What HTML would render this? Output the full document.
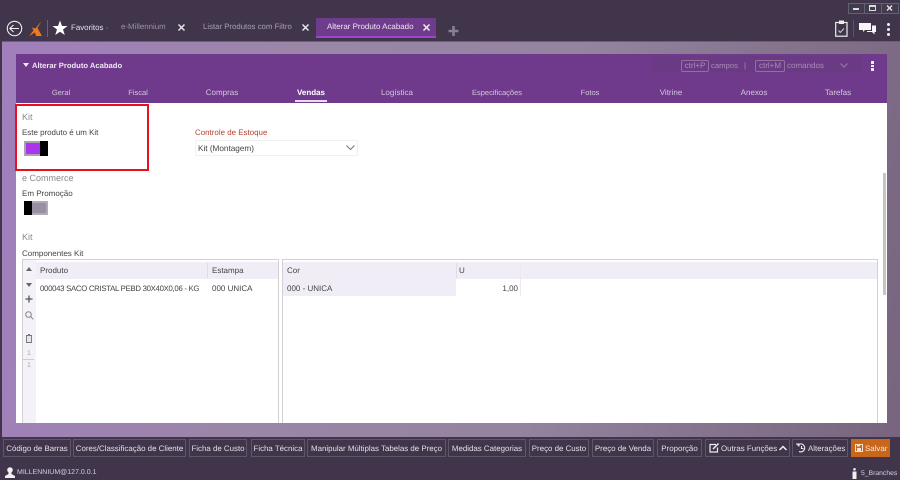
<!DOCTYPE html>
<html><head><meta charset="utf-8">
<style>
html,body{margin:0;padding:0;width:900px;height:480px;overflow:hidden;background:#40354a}
body{font-family:"Liberation Sans",sans-serif;font-size:8px;position:relative;text-rendering:geometricPrecision;filter:blur(.3px)}
.a{position:absolute;white-space:nowrap}
.t{position:absolute;white-space:nowrap;line-height:12px;height:12px}
.btn{position:absolute;top:439px;height:18px;box-sizing:border-box;border:1px solid #615668;color:#e4dfe8;text-align:center;line-height:18px;font-size:7.9px;white-space:nowrap;overflow:hidden}
.tab{color:#d5c6de;top:86.500px;font-size:7.5px;transform:translateX(-50%)}
svg{position:absolute;overflow:visible}
</style></head><body>

<!-- top bar -->
<div class="a" style="left:0;top:0;width:900px;height:41px;background:#40354a"></div>
<!-- window buttons -->
<div class="a" style="left:848px;top:3px;width:49px;height:9px;border:1px solid #5d6478;background:#433a4e"></div>
<div class="a" style="left:864px;top:3px;width:1px;height:10px;background:#5d6478"></div>
<div class="a" style="left:881px;top:3px;width:1px;height:10px;background:#5d6478"></div>
<div class="a" style="left:853px;top:8px;width:6px;height:2px;background:#dcdce0"></div>
<div class="a" style="left:869px;top:5px;width:5px;height:3px;border:1px solid #dcdce0;border-top-width:2px"></div>
<svg style="left:886px;top:5px" width="7" height="6"><path d="M1 0.5L6 5.500M6 0.5L1 5.500" stroke="#e4e4e8" stroke-width="1.400"/></svg>

<!-- back -->
<svg style="left:6px;top:20px" width="18" height="18" viewBox="0 0 18 18"><circle cx="8.500" cy="8.500" r="7.200" fill="none" stroke="#f0eef2" stroke-width="1.100"/><path d="M3.800 8.500H13M7.500 5L3.800 8.500L7.500 12" fill="none" stroke="#f0eef2" stroke-width="1.100"/></svg>
<!-- logo -->
<svg style="left:29px;top:21px" width="14" height="16" viewBox="0 0 14 16"><path d="M12.500 0L8.500 7L13 15H7L6 11.500L0 15L4.500 9.500L3 6.500L6.500 7.500Z" fill="#ee7a1c"/></svg>
<div class="a" style="left:47px;top:20px;width:1px;height:17px;background:#6b6274"></div>
<!-- star -->
<svg style="left:52px;top:20px" width="16" height="16" viewBox="0 0 16 16"><path d="M8 0.500L10 6H15.500L11 9.500L12.800 15L8 11.700L3.200 15L5 9.500L0.500 6H6Z" fill="#fff"/></svg>
<div class="t" style="left:71px;top:22px;color:#e6e0ea;font-size:7.900px">Favoritos<span style="color:#8d8496"> -</span></div>
<div class="t" style="left:121px;top:21px;color:#9c92a4;font-size:7.900px">e-Millennium</div>
<svg style="left:178px;top:24px" width="7" height="7"><path d="M.5 .5L6.500 6.500M6.500 .5L.5 6.500" stroke="#e8e4ea" stroke-width="1.500"/></svg>
<div class="t" style="left:203px;top:21px;color:#a89eb0;font-size:7.800px">Listar Produtos com Filtro</div>
<svg style="left:302px;top:24px" width="7" height="7"><path d="M.5 .5L6.500 6.500M6.500 .5L.5 6.500" stroke="#e8e4ea" stroke-width="1.500"/></svg>
<div class="a" style="left:316px;top:18px;width:120px;height:18px;background:#6f3c8c"></div>
<div class="a" style="left:316px;top:36px;width:120px;height:2px;background:#a044d0"></div>
<div class="t" style="left:327px;top:21px;color:#eee6f2;font-size:7.950px">Alterar Produto Acabado</div>
<svg style="left:423px;top:24px" width="7" height="7"><path d="M.5 .5L6.500 6.500M6.500 .5L.5 6.500" stroke="#eee" stroke-width="1.500"/></svg>
<svg style="left:448px;top:26px" width="11" height="11"><path d="M5.500 0V10M.5 5H10.500" stroke="#89808f" stroke-width="2.600"/></svg>

<!-- right icons -->
<svg style="left:835px;top:20px" width="13" height="17" viewBox="0 0 13 17"><rect x=".7" y="2.500" width="11.300" height="13.700" fill="none" stroke="#eee" stroke-width="1.200"/><rect x="4" y=".5" width="5" height="3.500" fill="#eee"/><path d="M3.500 10.500L5.200 12.500L9 8.500" fill="none" stroke="#ccc" stroke-width="1"/></svg>
<div class="a" style="left:853px;top:20px;width:1px;height:17px;background:#5c5365"></div>
<svg style="left:859px;top:23px" width="17" height="12" viewBox="0 0 17 12"><path d="M0 0H12V7H6L4 9V7H0Z" fill="#f6f6f6"/><path d="M13 2.500H17V9H15.500V11.500L13 9H8V8H13Z" fill="#f6f6f6"/></svg>
<div class="a" style="left:887px;top:23px;width:3px;height:3px;border-radius:2px;background:#f0f0f0"></div>
<div class="a" style="left:887px;top:28px;width:3px;height:3px;border-radius:2px;background:#f0f0f0"></div>
<div class="a" style="left:887px;top:33px;width:3px;height:3px;border-radius:2px;background:#f0f0f0"></div>

<!-- main background -->
<div class="a" style="left:2px;top:41px;width:898px;height:396px;background:linear-gradient(100deg,#a17fbd 0%,#9b86a8 30%,#94849f 60%,#78647f 100%);border-top:1px solid #6a5e74;box-sizing:border-box"></div>
<div class="a" style="left:0;top:41px;width:2px;height:396px;background:#40354a"></div>

<!-- card -->
<div class="a" style="left:16px;top:54px;width:871px;height:49px;background:#6f3a8c"></div>
<div class="a" style="left:16px;top:103px;width:871px;height:320px;background:#fff"></div>

<svg style="left:23px;top:63px" width="6" height="4"><path d="M0 0H6L3 4Z" fill="#eee"/></svg>
<div class="t" style="left:32px;top:60px;color:#efe6f3;font-size:7.650px;font-weight:bold">Alterar Produto Acabado</div>

<div class="a" style="left:652px;top:56px;width:209px;height:17px;background:#6a3a85"></div>
<div class="a" style="left:681px;top:60px;width:26px;height:10px;border:1px solid #93709f;border-radius:2px;color:#a88cb6;text-align:center;line-height:10px;font-size:8px">ctrl+P</div>
<div class="t" style="left:711px;top:60px;color:#a88cb6;font-size:7.700px">campos</div>
<div class="t" style="left:744px;top:60px;color:#a88cb6;font-size:8px">|</div>
<div class="a" style="left:755px;top:60px;width:28px;height:10px;border:1px solid #93709f;border-radius:2px;color:#a88cb6;text-align:center;line-height:10px;font-size:8px">ctrl+M</div>
<div class="t" style="left:787px;top:60px;color:#a88cb6;font-size:8px">comandos</div>
<svg style="left:840px;top:63px" width="8" height="5"><path d="M.5 .5L4 4L7.500 .5" fill="none" stroke="#9a7ca9" stroke-width="1"/></svg>
<div class="a" style="left:871px;top:61px;width:3px;height:2.500px;background:#eee"></div>
<div class="a" style="left:871px;top:64.500px;width:3px;height:2.500px;background:#eee"></div>
<div class="a" style="left:871px;top:68px;width:3px;height:2.500px;background:#eee"></div>

<div class="t tab" style="left:61px">Geral</div>
<div class="t tab" style="left:138px">Fiscal</div>
<div class="t tab" style="left:222px;font-size:8px">Compras</div>
<div class="t tab" style="left:311px;color:#fff;font-weight:bold;font-size:8px">Vendas</div>
<div class="a" style="left:295px;top:100px;width:32px;height:2px;background:#e6dcec"></div>
<div class="t tab" style="left:397px;font-size:8px">Logística</div>
<div class="t tab" style="left:497px">Especificações</div>
<div class="t tab" style="left:590px">Fotos</div>
<div class="t tab" style="left:671px;font-size:8px">Vitrine</div>
<div class="t tab" style="left:754px;font-size:8px">Anexos</div>
<div class="t tab" style="left:838px;font-size:8px">Tarefas</div>

<!-- Kit -->
<div class="t" style="left:22px;top:111px;color:#8a8a8a;font-size:9px">Kit</div>
<div class="t" style="left:22px;top:127px;color:#444;font-size:7.950px">Este produto é um Kit</div>
<div class="a" style="left:24px;top:141px;width:24px;height:15px;box-sizing:border-box;border:2px solid #a9a3ae;background:#fff"></div>
<div class="a" style="left:26px;top:143px;width:14px;height:11px;background:#ab35ee"></div>
<div class="a" style="left:40px;top:141px;width:8px;height:15px;background:#000"></div>
<div class="a" style="left:15px;top:104px;width:134px;height:67px;box-sizing:border-box;border:2px solid #e8101c"></div>

<div class="t" style="left:195px;top:127px;color:#b5412f;font-size:7.950px">Controle de Estoque</div>
<div class="a" style="left:195px;top:140px;width:163px;height:16px;box-sizing:border-box;border:1px solid #f0f0f0"></div>
<div class="t" style="left:198px;top:143px;color:#444;font-size:8.200px">Kit (Montagem)</div>
<svg style="left:346px;top:145px" width="9" height="6"><path d="M.5 .5L4.500 4.500L8.500 .5" fill="none" stroke="#777" stroke-width="1"/></svg>

<!-- e Commerce -->
<div class="t" style="left:22px;top:172px;color:#8a8a8a;font-size:9px">e Commerce</div>
<div class="t" style="left:22px;top:188px;color:#444;font-size:8px">Em Promoção</div>
<div class="a" style="left:24px;top:201px;width:24px;height:14px;box-sizing:border-box;border:2px solid #b0a9b6;background:#9a8ea5"></div>
<div class="a" style="left:24px;top:201px;width:8px;height:14px;background:#000"></div>

<!-- Kit grid -->
<div class="t" style="left:22px;top:231px;color:#8a8a8a;font-size:9px">Kit</div>
<div class="t" style="left:22px;top:248px;color:#444;font-size:8px">Componentes Kit</div>

<div class="a" style="left:22px;top:259px;width:257px;height:164px;box-sizing:border-box;border:1px solid #d2d0d4;border-bottom:0;background:#fff"></div>
<div class="a" style="left:23px;top:260px;width:13px;height:163px;background:#f4f1f8"></div>
<div class="a" style="left:36px;top:262px;width:242px;height:17px;background:#f1edf6"></div>
<div class="a" style="left:207px;top:263px;width:1px;height:15px;background:#e0dce6"></div>
<div class="t" style="left:40px;top:265px;color:#444;font-size:8px">Produto</div>
<div class="t" style="left:212px;top:265px;color:#444;font-size:8px">Estampa</div>
<div class="t" style="left:40px;top:283px;color:#444;font-size:7.800px;letter-spacing:-.3px">000043 SACO CRISTAL PEBD 30X40X0,06 - KG</div>
<div class="t" style="left:212px;top:283px;color:#444;font-size:8px">000 UNICA</div>

<svg style="left:26px;top:267px" width="6" height="4"><path d="M0 4H6L3 0Z" fill="#666"/></svg>
<svg style="left:26px;top:283px" width="6" height="4"><path d="M0 0H6L3 4Z" fill="#666"/></svg>
<svg style="left:25px;top:295px" width="8" height="8"><path d="M4 .5V7.500M.5 4H7.500" stroke="#555" stroke-width="1.300"/></svg>
<svg style="left:25px;top:311px" width="9" height="9"><circle cx="3.500" cy="3.500" r="2.800" fill="none" stroke="#888"/><path d="M5.500 5.500L8.300 8.300" stroke="#888"/></svg>
<svg style="left:25px;top:334px" width="8" height="9"><path d="M1 1.500H7M1.500 2V8.500H6.500V2M3 .5H5" fill="#e6e6e6" stroke="#777" stroke-width=".9"/></svg>
<div class="t" style="left:27px;top:348px;color:#aaa;font-size:7px">1</div>
<div class="a" style="left:23px;top:359px;width:11px;height:1px;background:#d0ccd4"></div>
<div class="t" style="left:27px;top:360px;color:#aaa;font-size:7px">1</div>

<div class="a" style="left:282px;top:259px;width:596px;height:164px;box-sizing:border-box;border:1px solid #d2d0d4;border-bottom:0;background:#fff"></div>
<div class="a" style="left:283px;top:262px;width:594px;height:17px;background:#f1edf6"></div>
<div class="a" style="left:283px;top:279px;width:173px;height:17px;background:#f1edf6"></div>
<div class="a" style="left:456px;top:263px;width:1px;height:15px;background:#e0dce6"></div>
<div class="a" style="left:520px;top:263px;width:1px;height:33px;background:#ece9f0"></div>
<div class="t" style="left:287px;top:265px;color:#444;font-size:8px">Cor</div>
<div class="t" style="left:459px;top:265px;color:#444;font-size:8px">U</div>
<div class="t" style="left:287px;top:283px;color:#444;font-size:8px">000 - UNICA</div>
<div class="t" style="left:490px;top:283px;width:28px;text-align:right;color:#444;font-size:8px">1,00</div>

<!-- scrollbar -->
<div class="a" style="left:883px;top:173px;width:3px;height:122px;background:#c4c4c4"></div>

<!-- bottom bar -->
<div class="a" style="left:0;top:437px;width:900px;height:43px;background:#40354a"></div>
<div class="btn" style="left:3px;width:68px">Código de Barras</div>
<div class="btn" style="left:73px;width:113px">Cores/Classificação de Cliente</div>
<div class="btn" style="left:189px;width:58px">Ficha de Custo</div>
<div class="btn" style="left:251px;width:54px">Ficha Técnica</div>
<div class="btn" style="left:307px;width:139px">Manipular Múltiplas Tabelas de Preço</div>
<div class="btn" style="left:448px;width:78px">Medidas Categorias</div>
<div class="btn" style="left:529px;width:60px">Preço de Custo</div>
<div class="btn" style="left:592px;width:62px">Preço de Venda</div>
<div class="btn" style="left:657px;width:45px">Proporção</div>
<div class="btn" style="left:705px;width:85px;text-align:left;padding-left:15px">Outras Funções</div>
<svg style="left:709px;top:443px" width="11" height="10" viewBox="0 0 11 10"><path d="M7 1.500H1V9H8.500V4.500" fill="none" stroke="#eee" stroke-width="1.200"/><path d="M4 6L9.500 .5" stroke="#eee" stroke-width="1.500"/></svg>
<svg style="left:779px;top:445px" width="8" height="6"><path d="M.5 5L4 1.500L7.500 5" fill="none" stroke="#eee" stroke-width="1.500"/></svg>
<div class="btn" style="left:792px;width:56px;text-align:left;padding-left:15px">Alterações</div>
<svg style="left:796px;top:443px" width="10" height="10" viewBox="0 0 10 10"><path d="M1.500 2.500A4 4 0 1 1 3 8.500M0 1H3V3.500M5.500 3V5.500H7.500" fill="none" stroke="#eee" stroke-width="1.100"/></svg>
<div class="btn" style="left:851px;width:39px;background:#c8661c;border-color:#c8661c;color:#f6e6d8;text-align:left;padding-left:13px">Salvar</div>
<svg style="left:855px;top:444px" width="8" height="8" viewBox="0 0 8 8"><rect x=".5" y=".5" width="7" height="7" fill="none" stroke="#f4e0cc"/><rect x="2" y="4" width="4" height="3" fill="#f4e0cc"/><rect x="2" y="1" width="3" height="1.500" fill="#f4e0cc"/></svg>

<svg style="left:5px;top:467px" width="10" height="11" viewBox="0 0 10 11"><circle cx="5" cy="3" r="2.800" fill="#f0f0f0"/><path d="M3.500 5H6.500V7L10 9V11H0V9L3.500 7Z" fill="#f0f0f0"/></svg>
<div class="t" style="left:17px;top:467px;color:#d4d0d8;font-size:7px">MILLENNIUM@127.0.0.1</div>
<svg style="left:852px;top:468px" width="5" height="11" viewBox="0 0 5 11"><circle cx="2.500" cy="1.300" r="1.300" fill="#f0f0f0"/><rect x="0.500" y="3.500" width="4" height="7.500" fill="#f0f0f0"/></svg>
<div class="t" style="left:861px;top:468px;color:#d4d0d8;font-size:6.800px">5_Branches</div>

</body></html>
